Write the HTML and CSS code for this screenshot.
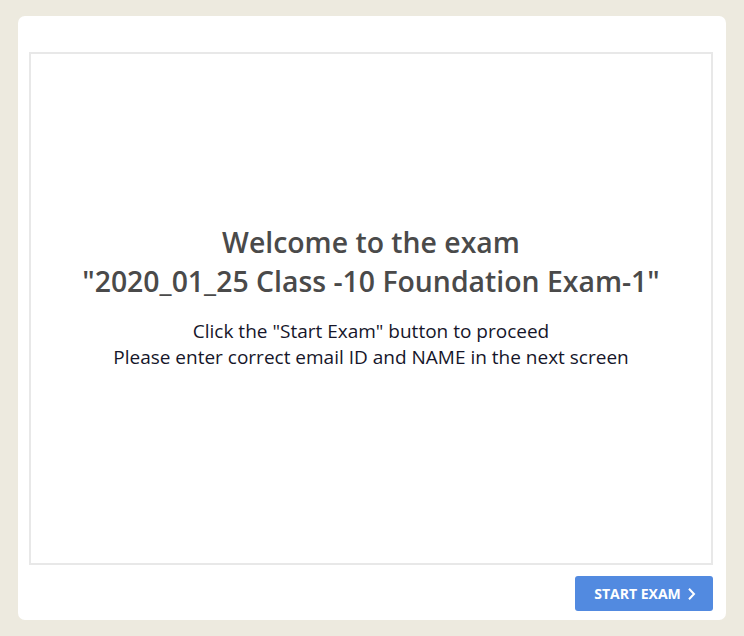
FILE: index.html
```html
<!DOCTYPE html>
<html>
<head>
<meta charset="utf-8">
<link rel="stylesheet" href="styles.css">
</head>
<body>
<div class="card">
  <div class="stage">
    <div class="welcome">
      <h1 class="title">Welcome to the exam<br>"2020_01_25 Class -10 Foundation Exam-1"</h1>
      <p class="info">Click the "Start Exam" button to proceed<br>Please enter correct email ID and NAME in the next screen</p>
    </div>
  </div>
  <div class="actions">
    <button class="start-btn">START EXAM
      <svg class="chev" width="9" height="14" viewBox="0 0 9 14"><path d="M2 1.8 L7 7 L2 12.2" fill="none" stroke="#fff" stroke-width="2"/></svg>
    </button>
  </div>
</div>
</body>
</html>
```

FILE: styles.css
```css
html, body {
  margin: 0;
  padding: 0;
  background: #edeadf;
  font-family: "Open Sans", "Liberation Sans", sans-serif;
}
body {
  padding: 16px 18px 16px 18px;
}
.card {
  width: 708px;
  height: 604px;
  box-sizing: border-box;
  background: #fff;
  border-radius: 7px;
  padding: 36px 13px 0 11px;
  display: flex;
  flex-direction: column;
}
.stage {
  height: 513px;
  box-sizing: border-box;
  border: 2px solid #e8e8e8;
  display: flex;
  align-items: center;
  justify-content: center;
  padding-bottom: 24px;
}
.welcome {
  text-align: center;
}
.title {
  margin: 0;
  font-size: 28.4px;
  font-weight: 600;
  line-height: 39px;
  color: #4a4a4a;
}
.info {
  margin: 16.5px 0 0;
  font-size: 19px;
  line-height: 26px;
  color: #16162a;
}
.actions {
  display: flex;
  justify-content: flex-end;
  padding-top: 11px;
}
.start-btn {
  width: 138px;
  height: 35px;
  border: none;
  border-radius: 3px;
  background: #528ae0;
  color: #fff;
  font-family: "Open Sans", "Liberation Sans", sans-serif;
  font-weight: 700;
  font-size: 14px;
  display: flex;
  align-items: center;
  justify-content: center;
  gap: 6px;
  padding: 0 0 0 2px;
}
.chev {
  display: block;
}
```
